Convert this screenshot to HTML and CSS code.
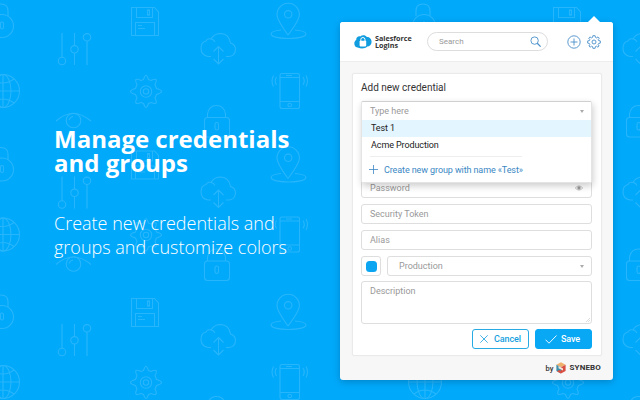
FILE: index.html
```html
<!DOCTYPE html>
<html lang="en">
<head>
<meta charset="utf-8">
<title>Salesforce Logins</title>
<link rel="stylesheet" href="styles.css">
</head>
<body>
<main class="stage">
  <svg class="pattern" width="640" height="400" viewBox="0 0 640 400" aria-hidden="true">
    <defs>
      <g id="tile">
        <path d="M-6 16V11Q-6 4 1 4Q8 4 8 11V16"/><circle cx="2" cy="26" r="11.5"/><rect x="0.5" y="22" width="3" height="7" rx="1.5"/>
        <circle cx="3" cy="91" r="16.5"/><ellipse cx="3" cy="91" rx="8" ry="16.5"/><path d="M-14 91H20M3 74V108M-8 79Q3 87 14 79M-8 103Q3 95 14 103"/>
        <path d="M62 33V57.5M74.500 33V45.500M74.500 53V65M87 41V65"/><circle cx="62" cy="61" r="3.700"/><circle cx="74.500" cy="49.300" r="3.700"/><circle cx="87" cy="37.300" r="3.700"/>
        <path d="M131.500 7.500H154.500L158.500 12V35.500H131.500ZM136.500 8V17.500H152.500V8M135.500 35V22.500H154.500V35M138 25.500H142M138 28.500H145"/><rect x="147.500" y="10" width="2" height="5"/>
        <path d="M143.500 79.500Q145 75.300 146 75.300Q147 75.300 148.500 79.500L151 80.500Q155 78.500 156 79.500Q157 80.500 155 84.500L156.500 88.500Q161.500 90 161.500 91.500Q161.500 93 156.500 94.500L155 98Q157 102 156 103Q155 104 151 102.500L148.500 103.500Q147 107.500 146 107.500Q145 107.500 143.500 103.500L141 102.500Q137 104 136 103Q135 102 137 98L135.500 94.500Q130.500 93 130.500 91.500Q130.500 90 135.500 88.500L137 84.500Q135 80.500 136 79.500Q137 78.500 141 80.500Z"/><circle cx="146" cy="91.500" r="5.700"/><circle cx="146" cy="91.500" r="2.700"/>
        <path d="M56 121Q73 106 91 121M69 120Q70 117 73 116.500"/><circle cx="73.500" cy="120.500" r="7.300"/>
        <path d="M211 56.500H208Q201 55 201 48.500Q201 42 206 41Q208 37 213.500 40L215 42M211 39Q214 33.500 221 33.500Q229 34 230.500 43Q235.500 44.500 235.500 49.500Q235 56 229 56.500H226M218.500 47V63.500M213.500 51.500L218.500 46.500L223.500 51.500M213.500 59L218.500 64L223.500 59"/>
        <path d="M288 35Q277 20 277 14.500A11.200 11.200 0 0 1 299.400 14.500Q299.400 20 288 35M281 30Q271 31 271 34C272 40 305 40 306 34Q306 31 295 30"/><circle cx="288.200" cy="14.300" r="3.700"/>
        <rect x="280" y="73.500" width="19.500" height="35" rx="2"/><path d="M280 77.500H299.500M280 101.500H299.500M286 75.500H292M276.500 77Q274 81 276.500 85M273.500 75.500Q270.500 81 273.500 86.500M303 77Q305.500 81 303 85M306 75.500Q309 81 306 86.500"/><circle cx="289.700" cy="105" r="1.800"/>
        <path d="M207.500 117.500V114Q209 105.500 216.500 105.500Q224 105.500 225.500 114V117.500"/><rect x="204.500" y="117.500" width="25" height="19.500" rx="3"/><rect x="215" y="122.500" width="3.500" height="7.500" rx="1.700"/>
      </g>
      <g id="band"><use href="#tile"/><use href="#tile" x="422"/></g>
    </defs>
    <use href="#band"/><use href="#band" y="143.500"/><use href="#band" y="291"/>
  </svg>

  <section class="intro">
    <h1 class="title">Manage credentials<br>and groups</h1>
    <p class="lead">Create new credentials and<br>groups and customize colors</p>
  </section>

  <section class="popup">
    <header class="top">
      <svg class="brand-mark" width="18" height="14" viewBox="0 0 18 14"><path d="M4.500 12.800C1.500 12.800.3 10.800.3 8.600C.3 6.800 1 5.500 2.200 4.900C2.200 2.500 4 1 6.200 1.400C8 0 11.500-.2 12.800 2C15.500 1.900 17.600 4 17.600 6.800C17.600 9.700 15.500 11.500 13.300 11.500C12 13.500 7 14 4.500 12.800Z" fill="#109ddf"/><path d="M6.800 6V4.600A2.100 2.100 0 0 1 11 4.600V6" fill="none" stroke="#fff" stroke-width="1"/><rect x="5.600" y="5.800" width="6.600" height="5.600" rx=".8" fill="#fff"/></svg>
      <strong class="brand">Salesforce<br>Logins</strong>
      <div class="search"><span>Search</span>
        <svg width="12" height="12" viewBox="0 0 12 12" fill="none" stroke="#4a8fc9" stroke-width=".9"><circle cx="4.600" cy="4.600" r="3.700"/><path d="M7.300 7.300L10.600 10.600" stroke-width="1.300"/></svg>
      </div>
      <svg class="add" width="14" height="14" viewBox="0 0 14 14" fill="none" stroke="#4a8fc9" stroke-width=".9"><circle cx="7" cy="7" r="6.200"/><path d="M7 3.500V10.500M3.500 7H10.500"/></svg>
      <svg class="gear" width="14" height="14" viewBox="0 0 14 14" fill="none" stroke="#4a8fc9" stroke-width=".9"><path d="M5.900.7H8.100L8.500 2.400L9.600 2.900L11 1.900L12.300 3.200L11.200 4.600L11.600 5.600L13.300 5.900V8.100L11.600 8.500L11.100 9.600L12.100 11L10.900 12.200L9.500 11.200L8.400 11.600L8.100 13.300H5.900L5.600 11.600L4.500 11.200L3.100 12.200L1.900 11L2.900 9.600L2.400 8.500L.7 8.100V5.900L2.400 5.600L2.800 4.600L1.700 3.200L3 1.900L4.400 2.900L5.500 2.400Z"/><circle cx="7" cy="7" r="2"/></svg>
    </header>
    <form class="card">
      <h2 class="card-title">Add new credential</h2>
      <div class="picker">
        <div class="picker-input"><span>Type here</span><i class="caret"></i></div>
        <div class="option selected">Test 1</div>
        <div class="option">Acme Production</div>
        <div class="rule"></div>
        <div class="create"><svg width="9" height="9" viewBox="0 0 9 9" stroke="#3a87c4" stroke-width=".8"><path d="M4.500 0V9M0 4.500H9"/></svg><span>Create new group with name «Test»</span></div>
      </div>
      <div class="field password"><span>Password</span><svg width="8" height="6" viewBox="0 0 8 6"><path d="M.3 3Q4-1.200 7.700 3Q4 7.200.3 3Z" fill="none" stroke="#aaa" stroke-width=".7"/><circle cx="4" cy="2.900" r="1.700" fill="#999"/></svg></div>
      <div class="field">Security Token</div>
      <div class="field">Alias</div>
      <div class="row"><div class="color"><i></i></div><div class="field type"><span>Production</span><i class="caret"></i></div></div>
      <div class="field description"><span>Description</span><svg width="4" height="4" viewBox="0 0 4 4" stroke="#bbb" stroke-width=".5"><path d="M0 4L4 0M2 4L4 2"/></svg></div>
      <div class="actions">
        <div class="button cancel"><svg width="8" height="8" viewBox="0 0 8 8" stroke="#169fe0" stroke-width=".8"><path d="M.3.3L7.700 7.700M7.700.3L.3 7.700"/></svg><span>Cancel</span></div>
        <div class="button save"><svg width="12" height="9" viewBox="0 0 12 9" fill="none" stroke="#fff" stroke-width=".9"><path d="M.5 4.700L4 8.200L11.500.5"/></svg><span>Save</span></div>
      </div>
    </form>
    <footer class="credit"><span class="by">by</span>
      <svg width="10" height="12" viewBox="0 0 10 12"><path d="M5 .3L9.600 2.800L5 5.300L.4 2.800Z" fill="#efb06d"/><path d="M.4 2.800L5 5.300V11.500L.4 9Z" fill="#3f8ea9"/><path d="M9.600 2.800L5 5.300V11.500L9.600 9Z" fill="#d94e42"/><path d="M2.500 4L7 6.500V8.500L2.500 6.200Z" fill="#f3e5dc"/><path d="M3 8L5 9V11.500L1 9.400Z" fill="#d94e42"/></svg>
      <strong class="synebo">SYNEBO</strong></footer>
  </section>
</main>
</body>
</html>
```
FILE: styles.css
```css
* { box-sizing: border-box; }
body { margin: 0; }
.stage { position: relative; display: flex; width: 640px; height: 400px; overflow: hidden; background: #01a9fb; font-family: Roboto, "Liberation Sans", sans-serif; }
.pattern { position: absolute; inset: 0; fill: none; stroke: #fff; stroke-width: 1.1; opacity: .15; }
.intro { position: relative; width: 340px; padding: 127px 0 0 54px; color: #fff; font-family: "Open Sans", sans-serif; white-space: nowrap; }
.title { margin: 0; font-size: 24px; line-height: 24px; font-weight: 700; }
.lead { margin: 36px 0 0; font-size: 18px; line-height: 24px; font-weight: 300; }

.popup { position: relative; display: flex; flex-direction: column; width: 273px; height: 358px; margin-top: 22px; border-radius: 3px; background: #f7f7f7; box-shadow: 0 2px 7px rgba(0, 50, 90, .3); }
.popup::before { content: ""; position: absolute; top: -6px; left: 248px; border: 6px solid transparent; border-top: 0; border-bottom-color: #fff; }
.top { display: flex; align-items: center; height: 40px; padding-left: 14px; border-bottom: 1px solid #ededed; border-radius: 3px 3px 0 0; background: #fff; }
.brand { width: 52px; margin-left: 3px; color: #333; font: 700 7.200px/6.500px "Open Sans", sans-serif; }
.search { display: flex; align-items: center; justify-content: space-between; width: 121px; height: 19px; padding: 0 5px 0 11px; border: 1px solid #ddd; border-radius: 10px; color: #999; font-size: 8px; }
.add { margin-left: 19px; }
.gear { margin-left: 6px; }

.card { position: relative; width: 250px; height: 283px; margin: 11px 0 0 12px; padding: 0 9px 0 8px; border: 1px solid #eaeaea; border-radius: 2px; background: #fff; box-shadow: 0 0 2px rgba(0, 0, 0, .04); }
.card-title { height: 104px; margin: 0; padding-top: 7px; color: #333; font-size: 10px; line-height: 13px; font-weight: 400; }
.field { display: flex; align-items: center; justify-content: space-between; height: 20px; margin-bottom: 6px; padding: 0 8px; border: 1px solid #dedede; border-radius: 3px; color: #999; font-size: 9px; line-height: 12px; }
.row { display: flex; gap: 6px; }
.color { display: flex; align-items: center; justify-content: center; width: 20px; height: 20px; border: 1px solid #dedede; border-radius: 3px; }
.color i { width: 11px; height: 11px; border-radius: 3.500px; background: #0ba5f2; }
.type { flex: 1; margin-bottom: 5px; padding-left: 11px; }
.description { align-items: flex-start; height: 43px; padding: 3px 1px 1px 8px; margin-bottom: 5px; }
.description svg { align-self: flex-end; }
.caret { margin-right: -1px; border: 2px solid transparent; border-top: 3px solid #aaa; border-bottom: 0; }

.picker { position: absolute; top: 27px; left: 8px; width: 231px; height: 82px; border: 1px solid #d5d5d5; border-color: #d0d0d0 #e4e4e4 #e4e4e4; border-radius: 2px; background: #fff; box-shadow: 1px 3px 7px rgba(0, 0, 0, .2); }
.picker-input { display: flex; align-items: center; justify-content: space-between; height: 18px; padding: 0 8px; color: #999; font-size: 9px; }
.option { height: 17px; padding-left: 9px; color: #222; font-size: 9px; line-height: 16px; letter-spacing: -.1px; }
.selected { background: #e3f5fe; }
.rule { width: 152px; height: 1px; margin: 2px 0 0 8px; background: #eee; }
.create { display: flex; align-items: center; height: 25px; padding-left: 7px; color: #3a87c4; font-size: 9px; letter-spacing: -.1px; }
.create span { margin-left: 6px; }

.actions { display: flex; justify-content: flex-end; gap: 6px; }
.button { display: flex; align-items: center; width: 57px; height: 20px; padding-left: 7px; border: 1px solid #28aae5; border-radius: 3px; color: #169fe0; font-size: 9px; font-weight: 500; letter-spacing: -.1px; }
.cancel span { margin-left: 6px; }
.save { padding-left: 9px; border-color: #08a8f5; background: #08a8f5; color: #fff; }
.save span { margin-left: 4px; }
.credit { display: flex; align-items: center; justify-content: flex-end; height: 24px; padding-right: 12px; color: #333; }
.by { margin-right: 3px; font-size: 7.500px; font-weight: 500; }
.synebo { margin-left: 3px; font: 700 8px/10px Roboto, sans-serif; letter-spacing: .15px; }
```
